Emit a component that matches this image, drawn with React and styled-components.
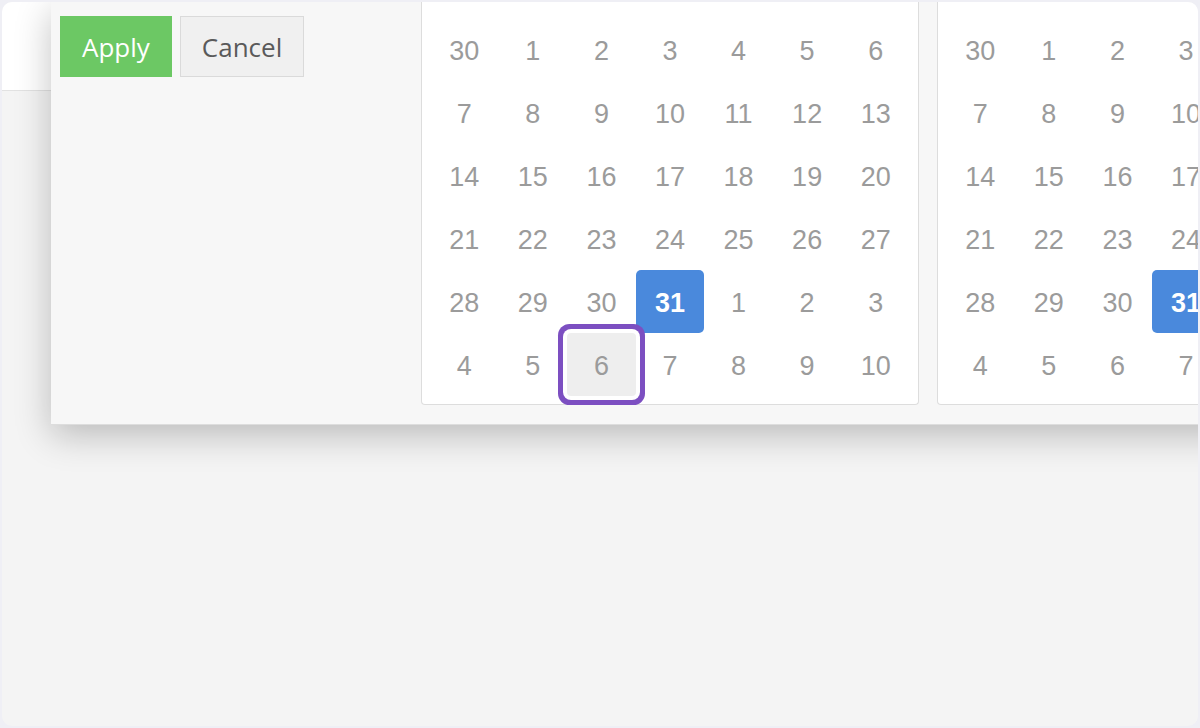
import React from "react";
import styled, { createGlobalStyle, css } from "styled-components";

const GlobalStyle = createGlobalStyle`
  html, body {
    margin: 0;
    padding: 0;
    background: #efeff5;
    overflow: hidden;
  }
  * { box-sizing: border-box; }
`;

const Frame = styled.div`
  width: 1200px;
  height: 728px;
  padding: 2px;
`;

const Screen = styled.div`
  position: relative;
  height: 100%;
  border-radius: 10px;
  overflow: hidden;
  background: #f4f4f4;
`;

const TopBar = styled.div`
  height: 89px;
  background: #ffffff;
  border-bottom: 1px solid #e2e2e2;
`;

const Dropdown = styled.div`
  position: absolute;
  top: 0;
  left: 49px;
  right: -320px;
  display: flex;
  padding: 0 0 19px 9px;
  background: #f7f7f7;
  border-bottom: 1px solid #dddddd;
  box-shadow: 0 10px 34px rgba(0, 0, 0, 0.24);
`;

const Ranges = styled.div`
  width: 361px;
  flex: none;
  padding-top: 14px;
`;

const ButtonRow = styled.div`
  display: flex;
  gap: 8px;
`;

const Button = styled.button`
  height: 61px;
  padding: 0 21px;
  font-family: "Open Sans", "Liberation Sans", sans-serif;
  font-size: 26px;
  border-radius: 0;
  cursor: pointer;
  ${(p) =>
    p.$primary
      ? css`
          background: #6cc864;
          color: #ffffff;
          border: 1px solid #6cc864;
        `
      : css`
          background: #f0f0f0;
          color: #5a5a5a;
          border: 1px solid #dadada;
        `}
`;

const Calendars = styled.div`
  display: flex;
  gap: 18px;
  align-items: flex-start;
`;

const Calendar = styled.div`
  width: 498px;
  flex: none;
  padding: 16px 8px 8px;
  background: #ffffff;
  border: 1px solid #dddddd;
  border-top: none;
  border-radius: 0 0 4px 4px;
`;

const Grid = styled.div`
  display: grid;
  grid-template-columns: repeat(7, 1fr);
  grid-auto-rows: 63px;
`;

const Day = styled.div`
  position: relative;
  display: flex;
  align-items: center;
  justify-content: center;
  padding-top: 3px;
  font-family: "Liberation Sans", Arial, sans-serif;
  font-size: 27px;
  color: #9b9b9b;
  border-radius: 5px;
  ${(p) =>
    p.$active &&
    css`
      background: #4a89dc;
      color: #ffffff;
      font-weight: 700;
    `}
  ${(p) =>
    p.$focused &&
    css`
      z-index: 1;
      background: #eeeeee;
      border-radius: 4px;
      box-shadow: 0 0 0 4px #ffffff, 0 0 0 9px #7c4fc1;
    `}
`;

const days = [
  30, 1, 2, 3, 4, 5, 6,
  7, 8, 9, 10, 11, 12, 13,
  14, 15, 16, 17, 18, 19, 20,
  21, 22, 23, 24, 25, 26, 27,
  28, 29, 30, 31, 1, 2, 3,
  4, 5, 6, 7, 8, 9, 10,
];

function Month({ focusIndex }) {
  return (
    <Calendar>
      <Grid>
        {days.map((d, i) => (
          <Day key={i} $active={i === 31} $focused={i === focusIndex}>
            {d}
          </Day>
        ))}
      </Grid>
    </Calendar>
  );
}

export default function App() {
  return (
    <>
      <GlobalStyle />
      <Frame>
        <Screen>
          <TopBar />
          <Dropdown>
            <Ranges>
              <ButtonRow>
                <Button $primary>Apply</Button>
                <Button>Cancel</Button>
              </ButtonRow>
            </Ranges>
            <Calendars>
              <Month focusIndex={37} />
              <Month focusIndex={-1} />
            </Calendars>
          </Dropdown>
        </Screen>
      </Frame>
    </>
  );
}
